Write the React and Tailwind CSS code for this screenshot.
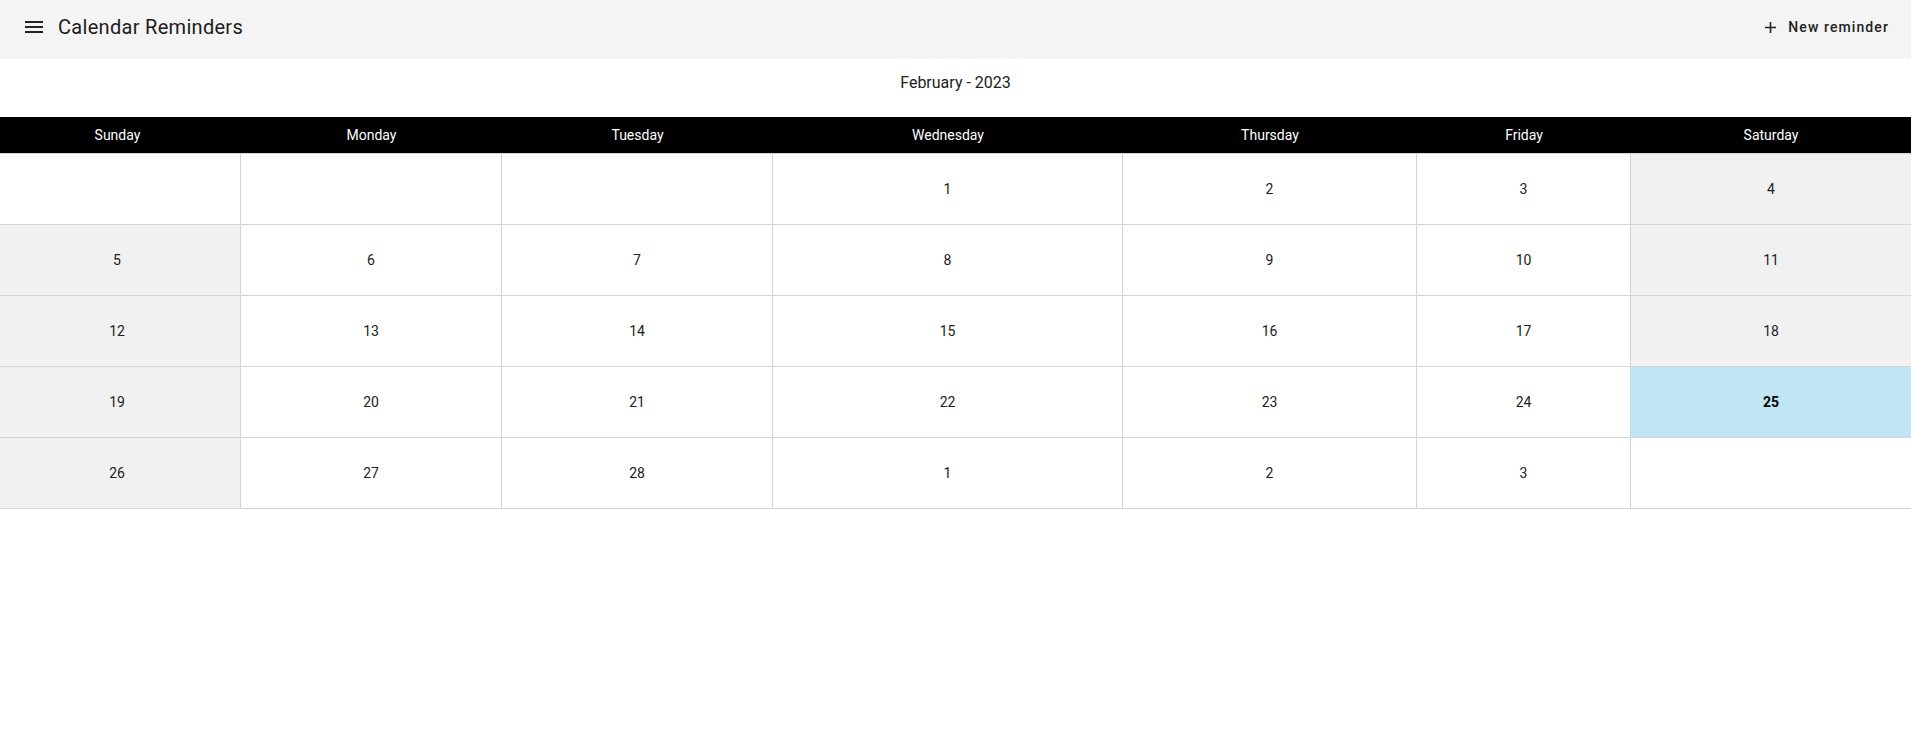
import { MdMenu, MdAdd } from 'react-icons/md'

const days = ['Sunday', 'Monday', 'Tuesday', 'Wednesday', 'Thursday', 'Friday', 'Saturday']

// null = empty cell, today marked separately
const weeks = [
    [null, null, null, 1, 2, 3, 4],
    [5, 6, 7, 8, 9, 10, 11],
    [12, 13, 14, 15, 16, 17, 18],
    [19, 20, 21, 22, 23, 24, 25],
    [26, 27, 28, 1, 2, 3, null],
]

const TODAY = '3-6'

export default function App() {
    return (
        <div className="min-h-screen bg-white text-[#212121]" style={{ fontFamily: 'Roboto, "Liberation Sans", sans-serif' }}>
            {/* Top bar */}
            <header className="h-[59px] bg-[#f4f4f4] flex items-center justify-between pb-[5px] pl-[22px] pr-[22px]">
                <div className="flex items-center">
                    <MdMenu className="w-6 h-6 text-[#222]" />
                    <h1 className="ml-[12px] text-[20px] leading-7 font-normal tracking-[0.3px] text-[#1c1c1c]">Calendar Reminders</h1>
                </div>
                <button className="flex items-center gap-[8px] text-sm font-medium tracking-[1.1px] text-[#222]">
                    <MdAdd className="w-[19px] h-[19px]" />
                    <span>New reminder</span>
                </button>
            </header>

            {/* Month title */}
            <div className="pt-[12px] pb-[22px] text-center text-base leading-6 text-[#212121]">
                February - 2023
            </div>

            {/* Calendar */}
            <div className="grid grid-cols-[241px_261px_271px_350px_294px_214px_1fr]">
                {days.map((d, i) => (
                    <div key={d} className={`h-9 bg-black text-white text-sm font-normal flex items-center justify-center ${i === 0 ? 'pr-[6px]' : ''}`}>
                        {d}
                    </div>
                ))}
            </div>
            <div className="grid grid-cols-[241px_261px_271px_350px_294px_214px_1fr] border-t border-[#d4d4d4]">
                {weeks.map((week, wi) =>
                    week.map((day, di) => {
                        const isToday = `${wi}-${di}` === TODAY
                        const weekend = day !== null && (di === 0 || di === 6)
                        let bg = 'bg-white'
                        if (isToday) bg = 'bg-[#c0e6f6]'
                        else if (weekend) bg = 'bg-[#f1f1f1]'
                        return (
                            <div
                                key={`${wi}-${di}`}
                                className={`h-[71px] border-b border-[#d4d4d4] ${di < 6 ? 'border-r' : ''} ${di === 0 ? 'pr-[6px]' : ''} ${bg} flex items-center justify-center text-sm ${isToday ? 'font-bold text-black' : ''}`}
                            >
                                {day}
                            </div>
                        )
                    })
                )}
            </div>
        </div>
    )
}
